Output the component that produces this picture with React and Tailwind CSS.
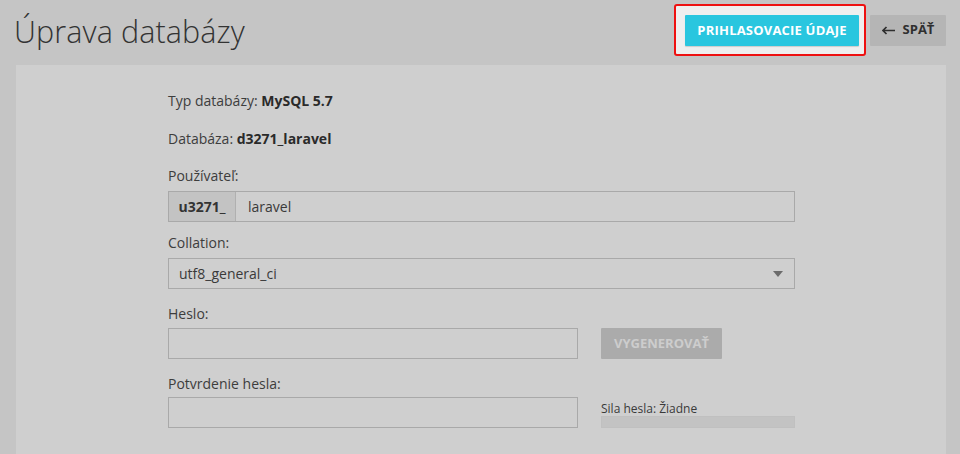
import React from 'react';

function Label({ children, className = '' }) {
  return <div className={`text-[14px] leading-[20px] text-[#3d3d3d] ${className}`}>{children}</div>;
}

function Field({ className = '', children }) {
  return (
    <div className={`h-[31px] border border-[#a9a9a9] bg-[#cfcfcf] flex items-center ${className}`}>
      {children}
    </div>
  );
}

export default function App() {
  return (
    <div className="min-h-[454px] h-[454px] overflow-hidden bg-[#c5c5c5] font-['Open_Sans',sans-serif]">
      <header className="h-[65px] flex items-center justify-between pl-[14px] pr-[14px]">
        <h1 className="text-[30.5px] font-light text-[#333333] leading-none -mt-[2px] tracking-[0.1px]">Úprava databázy</h1>
        <div className="flex items-center gap-[4px] -mt-[5px]">
          <div className="border-2 border-[#ee1111] rounded-[3px] bg-[#efefef] pl-[9px] pr-[5px] pt-[9px] pb-[8px]">
            <button className="h-[31px] w-[174px] bg-[#29c6df] text-white text-[13px] font-bold tracking-[0.2px] rounded-[1px] shadow-[0_1px_1px_rgba(0,0,0,0.15)]">
              PRIHLASOVACIE ÚDAJE
            </button>
          </div>
          <button className="h-[31px] w-[76px] bg-[#b5b5b5] text-[#2f2f2f] text-[13px] font-bold rounded-[1px] flex items-center justify-center gap-[8px]">
            <svg width="13" height="9" viewBox="0 0 13 9" fill="none" stroke="#2f2f2f" strokeWidth="1.7">
              <path d="M1 4.5h12M4.5 1L1 4.5L4.5 8" />
            </svg>
            <span>SPÄŤ</span>
          </button>
        </div>
      </header>

      <div className="ml-[16px] mr-[14px] bg-[#cfcfcf] h-[400px] pt-[26px] pl-[152px]">
        <div className="w-[627px]">
          <Label>Typ databázy: <b className="font-bold text-[#2a2a2a]">MySQL 5.7</b></Label>
          <Label className="mt-[18px]">Databáza: <b className="font-bold text-[#2a2a2a]">d3271_laravel</b></Label>
          <Label className="mt-[17px]">Používateľ:</Label>
          <Field className="mt-[5px]">
            <span className="h-full w-[67px] bg-[#c3c3c3] border-r border-[#b0b0b0] flex items-center justify-center text-[14px] font-bold text-[#333]">u3271_</span>
            <span className="pl-[12px] text-[14px] text-[#3a3a3a]">laravel</span>
          </Field>
          <Label className="mt-[11px]">Collation:</Label>
          <Field className="mt-[5px] justify-between pl-[10px] pr-[11px]">
            <span className="text-[14px] text-[#3a3a3a]">utf8_general_ci</span>
            <svg width="10" height="6" viewBox="0 0 10 6"><path d="M0 0h10L5 6z" fill="#6b6b6b" /></svg>
          </Field>
          <Label className="mt-[15px]">Heslo:</Label>
          <div className="mt-[4px] flex items-start gap-[23px]">
            <Field className="w-[410px]" />
            <button className="h-[31px] w-[121px] bg-[#ababab] text-[#cdcdcd] text-[13px] font-bold rounded-[1px]">VYGENEROVAŤ</button>
          </div>
          <Label className="mt-[15px]">Potvrdenie hesla:</Label>
          <div className="mt-[3px] flex items-start gap-[23px]">
            <Field className="w-[410px]" />
            <div className="w-[194px] pt-[5px]">
              <div className="text-[12px] leading-[14px] text-[#3a3a3a]">Sila hesla: Žiadne</div>
              <div className="h-[12px] bg-[#c3c3c3] border border-[#c0c0c0]" />
            </div>
          </div>
        </div>
      </div>
    </div>
  );
}
